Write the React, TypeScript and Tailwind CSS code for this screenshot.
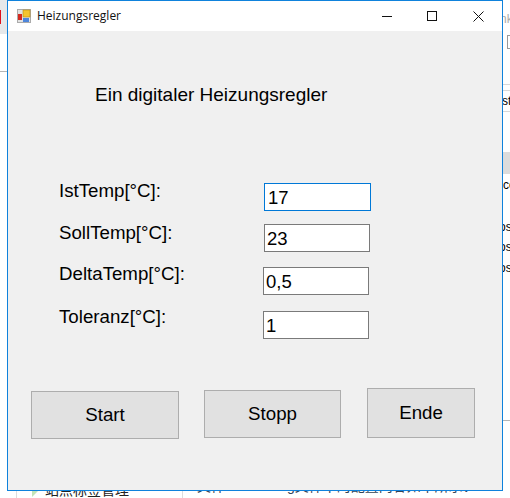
const arial = "font-['Liberation_Sans',Arial,sans-serif]"

const rows = [
    { label: "IstTemp[°C]:", value: "17", top: "mt-0", labelTop: "-mt-[6px]", inputLeft: "ml-[205px]", focused: true },
    { label: "SollTemp[°C]:", value: "23", top: "mt-[13px]", labelTop: "-mt-[5px]", inputLeft: "ml-[205px]", focused: false },
    { label: "DeltaTemp[°C]:", value: "0,5", top: "mt-[15px]", labelTop: "-mt-[7px]", inputLeft: "ml-[204px]", focused: false },
    { label: "Toleranz[°C]:", value: "1", top: "mt-[16px]", labelTop: "-mt-[8px]", inputLeft: "ml-[204px]", focused: false },
]

const Field = ({ row }: { row: (typeof rows)[number] }) => {
    return (
        <div className={`relative flex h-[28px] ${row.top}`}>
            <p className={`w-0 whitespace-nowrap pl-[51px] text-[18.7px] leading-[28px] text-black ${row.labelTop}`}>{row.label}</p>
            <div
                className={`${row.inputLeft} flex h-[28px] w-[106px] items-center border bg-white pl-[2px] pt-[1px] text-[18.5px] text-black ${row.focused ? "w-[107px] border-[#0078d7] pl-[3px]" : "border-[#7a7a7a]"}`}
            >
                {row.value}
            </div>
        </div>
    )
}

const Window = () => {
    return (
        <div className={`h-[491px] w-[496px] shrink-0 border border-[#0f82dc] bg-[#f0f0f0] ${arial}`}>
            <div className="flex h-[30px] items-center bg-white">
                <svg className="ml-[9px] h-[14px] w-[14px]" viewBox="0 0 14 14">
                    <rect x="0.5" y="0.5" width="13" height="13" fill="#e2e2e2" stroke="#ababab" />
                    <rect x="1" y="5" width="4" height="6" fill="#d42a20" />
                    <rect x="6" y="1" width="7" height="7" fill="#f4c430" stroke="#b98a10" strokeWidth="0.6" />
                    <rect x="6" y="9" width="6" height="4" fill="#4d86dc" />
                </svg>
                <span className="ml-[6px] font-['Open_Sans',sans-serif] text-[12px] text-[#111]">Heizungsregler</span>
                <div className="ml-auto flex items-center">
                    <svg className="h-[10px] w-[10px]" viewBox="0 0 10 10">
                        <path d="M0 5.5H10" stroke="#111" fill="none" />
                    </svg>
                    <svg className="ml-[35px] h-[10px] w-[10px]" viewBox="0 0 10 10">
                        <rect x="0.5" y="0.5" width="9" height="9" stroke="#111" fill="none" />
                    </svg>
                    <svg className="ml-[36px] mr-[18px] h-[11px] w-[11px]" viewBox="0 0 11 11">
                        <path d="M0.5 0.5L10.5 10.5M10.5 0.5L0.5 10.5" stroke="#111" fill="none" />
                    </svg>
                </div>
            </div>
            <h1 className="mt-[50px] pl-[87px] text-[19px] font-normal leading-[28px] text-black">Ein digitaler Heizungsregler</h1>
            <div className="mt-[74px]">
                {rows.map((row) => (
                    <Field key={row.label} row={row} />
                ))}
            </div>
            <div className="mt-[49px] flex items-end pl-[23px]">
                <button className="mb-[-1px] h-[48px] w-[148px] border border-[#adadad] bg-[#e1e1e1] pt-[1px] text-[18.7px] text-black">Start</button>
                <button className="ml-[25px] h-[48px] w-[137px] border border-[#adadad] bg-[#e1e1e1] pt-[1px] text-[18.7px] text-black">Stopp</button>
                <button className="ml-[26px] h-[50px] w-[108px] border border-[#adadad] bg-[#e1e1e1] text-[18.7px] text-black">Ende</button>
            </div>
        </div>
    )
}

const App = () => {
    return (
        <div className={`h-[498px] w-[510px] overflow-hidden bg-white ${arial}`}>
            <div className="flex h-[491px]">
                <div className="w-[7px] shrink-0">
                    <div className="h-[34px] bg-[#e6e8ea] pt-[10px]">
                        <div className="h-[14px] w-[1px] bg-[#e0101a]"></div>
                    </div>
                    <div className="mt-[37px] h-[1px] bg-[#b5b5b5]"></div>
                </div>
                <Window />
                <div className="min-w-0 flex-1 overflow-hidden text-[12px] leading-[14px] text-black">
                    <div className="mt-[12px] -ml-[3px] text-[#aaa]">nk</div>
                    <div className="ml-[4px] mt-[9px] h-[14px] w-[4px] border border-[#999]"></div>
                    <div className="mt-[35px] h-[1px] bg-[#d8d8d8]"></div>
                    <div className="mt-[5px] h-[1px] bg-[#d8d8d8]"></div>
                    <div className="mt-[3px] -ml-[1px]">st</div>
                    <div className="mt-[3px] h-[1px] bg-[#d8d8d8]"></div>
                    <div className="mt-[40px] h-[22px] bg-[#dcdcdc]"></div>
                    <div className="mt-[4px]">co</div>
                    <div className="mt-[28px] -ml-[4px]">os</div>
                    <div className="mt-[6px] -ml-[4px]">os</div>
                    <div className="mt-[7px] -ml-[4px]">os</div>
                    <div className="mt-[145px] h-[1px] bg-[#b5b5b5]"></div>
                </div>
            </div>
            <div className="flex h-[7px] overflow-hidden font-['Liberation_Sans','Noto_Sans_CJK_SC',sans-serif] text-[14px] leading-[16px] text-[#222]">
                <div className="ml-[16px] flex h-full w-[167px] shrink-0 border-x border-[#ddd] pl-[15px]">
                    <svg className="h-[6px] w-[6px] shrink-0" viewBox="0 0 6 6">
                        <path d="M0 0H6L0 6Z" fill="#c2e4b8" />
                    </svg>
                    <div className="-mt-[9px] ml-[7px] whitespace-nowrap">站点标签管理</div>
                </div>
                <div className="ml-[14px] -mt-[13px] whitespace-nowrap text-[#345]">文件Web.config文件中的配置内容如下所示：www</div>
            </div>
        </div>
    )
}

export default App
